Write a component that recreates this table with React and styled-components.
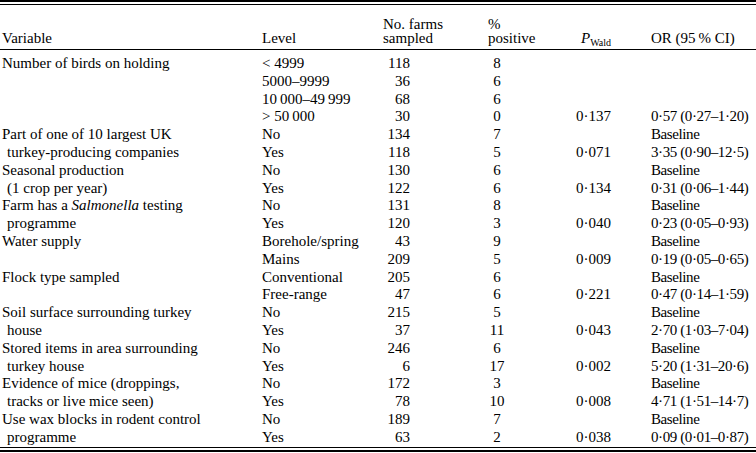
import React from 'react'
import styled, { createGlobalStyle } from 'styled-components';

const GlobalStyle = createGlobalStyle`
    html, body {
        margin: 0;
        padding: 0;
        background: #fff;
    }
    body {
        font-family: "Liberation Serif", "Times New Roman", serif;
        color: #000;
    }
`

const rows = [
    { v: ['Number of birds on holding'], l: ['< 4999', '5000–9999', '10\u2009000–49\u2009999', '> 50\u2009000'], n: ['118', '36', '68', '30'], p: ['8', '6', '6', '0'], w: '0·137', or: '0·57 (0·27–1·20)' },
    { v: ['Part of one of 10 largest UK', 'turkey-producing companies'], l: ['No', 'Yes'], n: ['134', '118'], p: ['7', '5'], w: '0·071', or: '3·35 (0·90–12·5)' },
    { v: ['Seasonal production', '(1 crop per year)'], l: ['No', 'Yes'], n: ['130', '122'], p: ['6', '6'], w: '0·134', or: '0·31 (0·06–1·44)' },
    { v: [<>Farm has a <i>Salmonella</i> testing</>, 'programme'], l: ['No', 'Yes'], n: ['131', '120'], p: ['8', '3'], w: '0·040', or: '0·23 (0·05–0·93)' },
    { v: ['Water supply'], l: ['Borehole/spring', 'Mains'], n: ['43', '209'], p: ['9', '5'], w: '0·009', or: '0·19 (0·05–0·65)' },
    { v: ['Flock type sampled'], l: ['Conventional', 'Free-range'], n: ['205', '47'], p: ['6', '6'], w: '0·221', or: '0·47 (0·14–1·59)' },
    { v: ['Soil surface surrounding turkey', 'house'], l: ['No', 'Yes'], n: ['215', '37'], p: ['5', '11'], w: '0·043', or: '2·70 (1·03–7·04)' },
    { v: ['Stored items in area surrounding', 'turkey house'], l: ['No', 'Yes'], n: ['246', '6'], p: ['6', '17'], w: '0·002', or: '5·20 (1·31–20·6)' },
    { v: ['Evidence of mice (droppings,', 'tracks or live mice seen)'], l: ['No', 'Yes'], n: ['172', '78'], p: ['3', '10'], w: '0·008', or: '4·71 (1·51–14·7)' },
    { v: ['Use wax blocks in rodent control', 'programme'], l: ['No', 'Yes'], n: ['189', '63'], p: ['7', '2'], w: '0·038', or: '0·09 (0·01–0·87)' },
]

const Results = () => {
    return (
        <Frame>
            <GlobalStyle />
            <TopRules />
            <Table>
                <colgroup>
                    <col style={{ width: 262 }} />
                    <col style={{ width: 121 }} />
                    <col style={{ width: 105 }} />
                    <col style={{ width: 88 }} />
                    <col style={{ width: 75 }} />
                    <col />
                </colgroup>
                <thead>
                    <tr>
                        <Head $first>Variable</Head>
                        <Head>Level</Head>
                        <Head>No. farms<br />sampled</Head>
                        <Head>%<br />positive</Head>
                        <Head $pad={5}><i>P</i><Sub>Wald</Sub></Head>
                        <Head>OR (95{'\u2009'}% CI)</Head>
                    </tr>
                </thead>
                <tbody>
                    {rows.map((r, i) =>
                        r.l.map((lvl, j) => (
                            <Row key={i + '-' + j} $top={i === 0 && j === 0}>
                                <Cell $first>
                                    {j === 0 && r.v[0]}
                                    {j === 1 && r.v.length === 2 && <Indent>{r.v[1]}</Indent>}
                                </Cell>
                                <Cell>{lvl}</Cell>
                                <Cell><Num $w={27} $align="right">{r.n[j]}</Num></Cell>
                                <Cell><Num $w={18} $align="center">{r.p[j]}</Num></Cell>
                                <Cell>{j === r.l.length - 1 ? r.w : ''}</Cell>
                                <Cell $tight>{j === r.l.length - 1 ? r.or : (r.l.length === 2 ? 'Baseline' : '')}</Cell>
                            </Row>
                        ))
                    )}
                </tbody>
            </Table>
            <BottomRules />
        </Frame>
    )
}

export default Results;

const Frame = styled.div`
    width: 756px;
    height: 453px;
    overflow: hidden;
`

const TopRules = styled.div`
    border-top: 2px solid #000;
    border-bottom: 1px solid #000;
    height: 2px;
`

const BottomRules = styled.div`
    border-top: 1px solid #000;
    border-bottom: 2px solid #000;
    height: 2px;
`

const Table = styled.table`
    width: 756px;
    border-collapse: collapse;
    table-layout: fixed;
    font-family: "Liberation Serif", "Times New Roman", serif;
    font-size: 15px;
    color: #000;
`

const Head = styled.th`
    font-weight: normal;
    text-align: left;
    vertical-align: bottom;
    line-height: 14px;
    padding: 12px 0 4px ${p => (p.$first ? '2px' : `${p.$pad || 0}px`)};
    border-bottom: 1px solid #000;
    white-space: nowrap;
`

const Sub = styled.sub`
    font-size: 10px;
    vertical-align: -3px;
    line-height: 0;
`

const Row = styled.tr`
    td {
        padding-top: ${p => (p.$top ? '5px' : '0')};
    }
`

const Cell = styled.td`
    line-height: 17.8px;
    padding: 0 0 0 ${p => (p.$first ? '2px' : '0')};
    letter-spacing: ${p => (p.$tight ? '-0.4px' : 'normal')};
    white-space: nowrap;
    vertical-align: top;
`

const Indent = styled.span`
    padding-left: 5px;
`

const Num = styled.span`
    display: inline-block;
    width: ${p => p.$w}px;
    text-align: ${p => p.$align};
`
